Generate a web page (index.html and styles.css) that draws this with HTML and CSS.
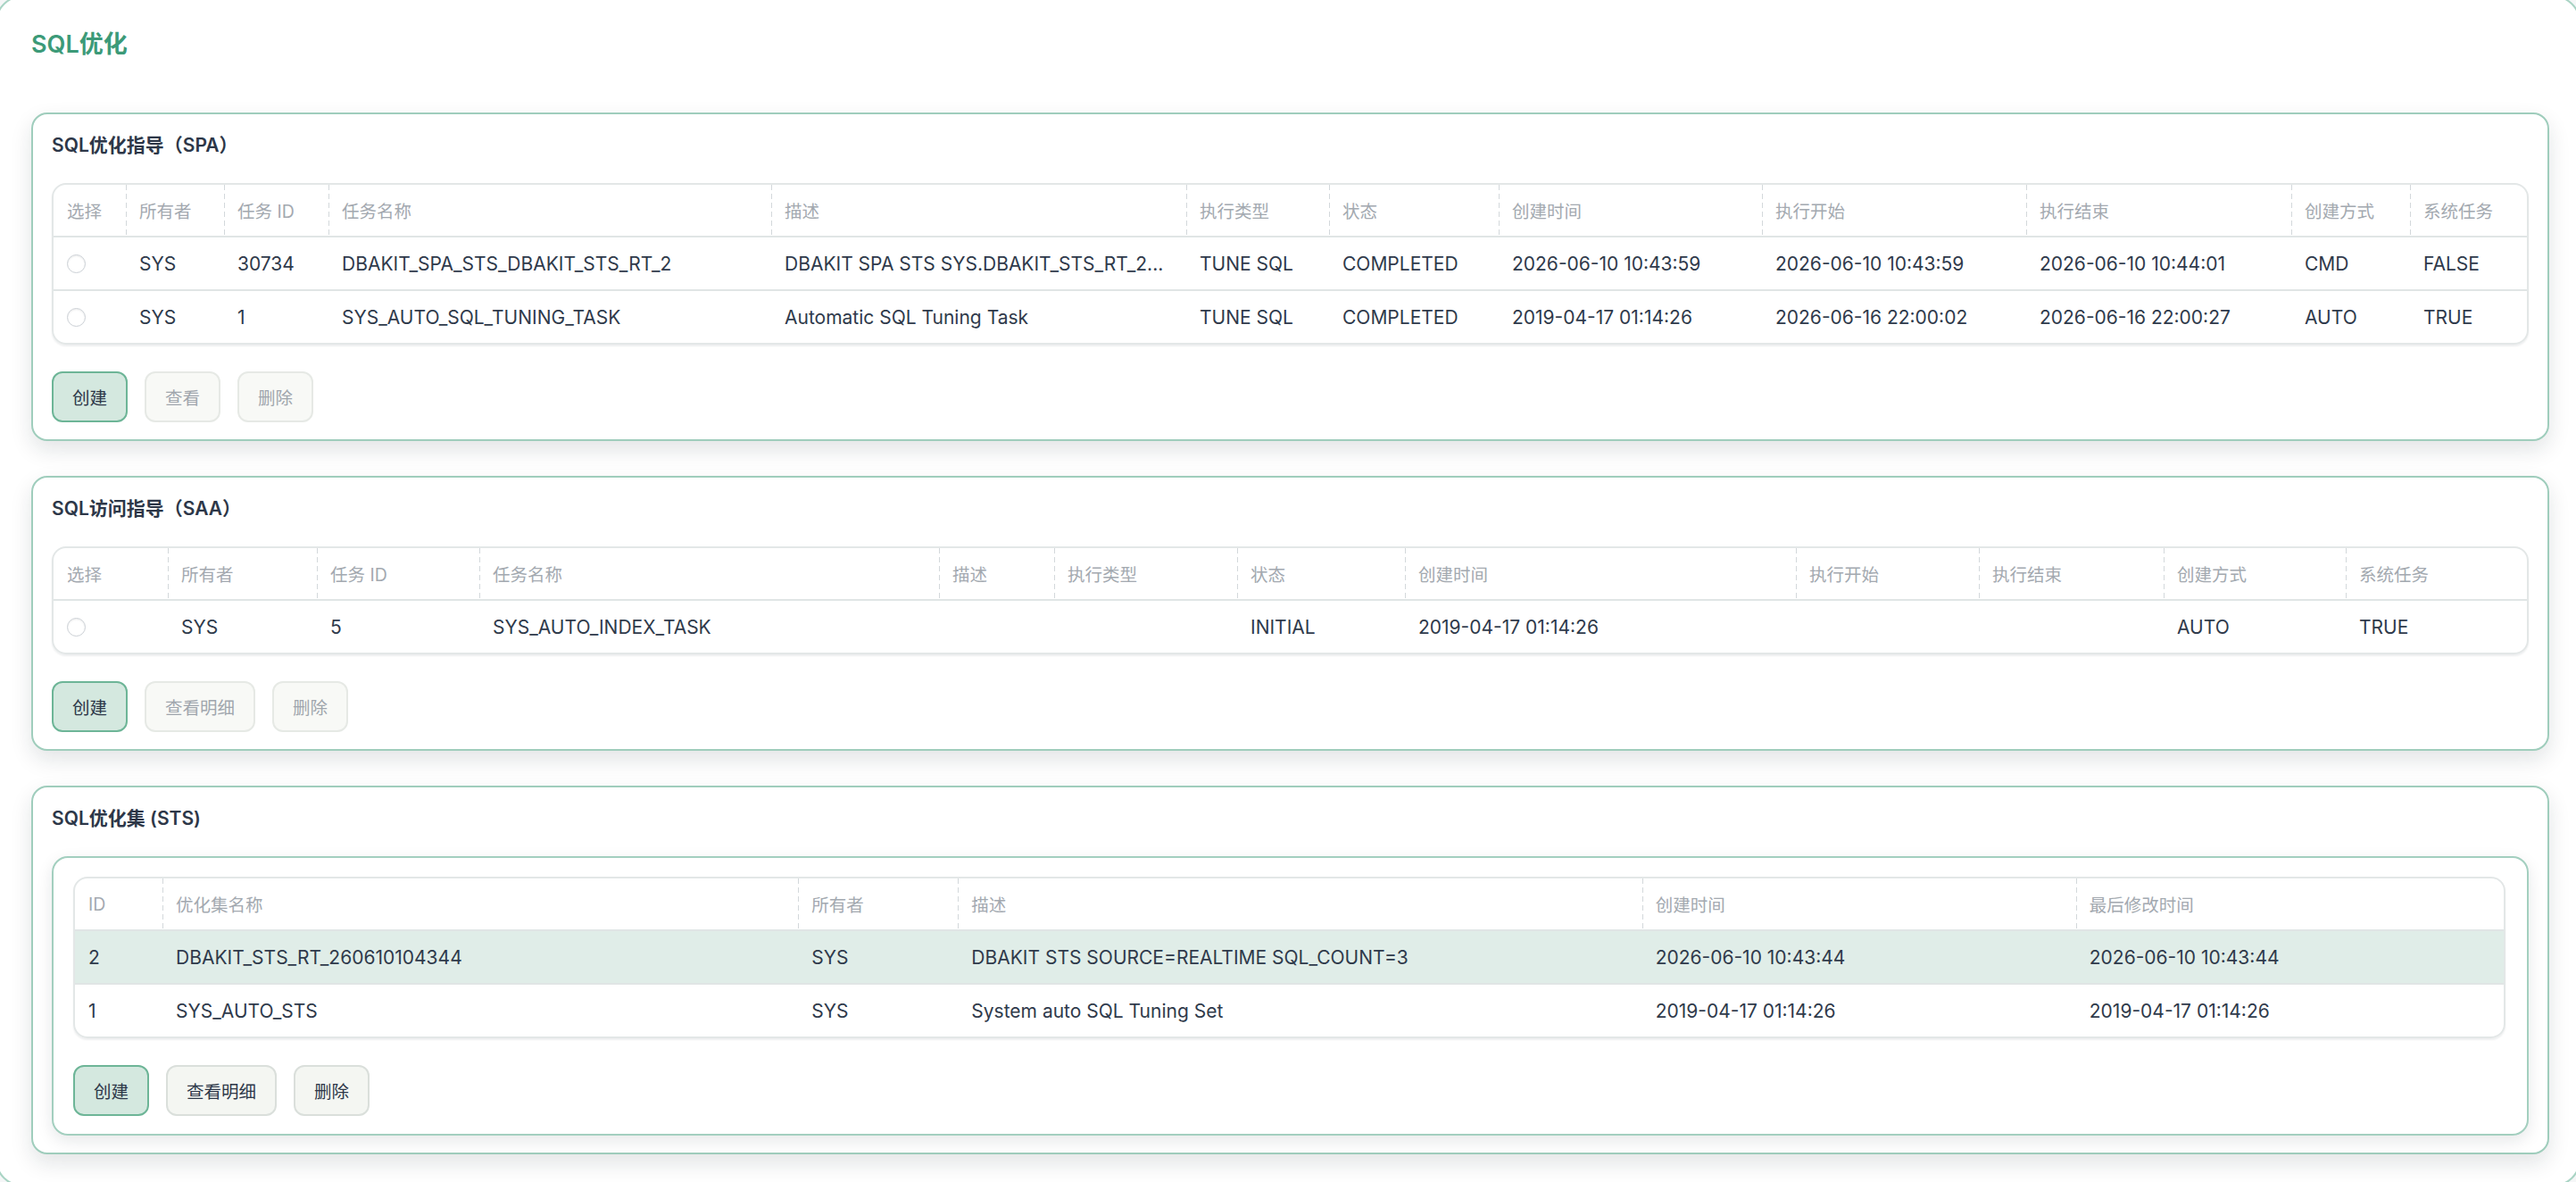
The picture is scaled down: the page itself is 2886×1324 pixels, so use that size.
FILE: index.html
```html
<!DOCTYPE html>
<html lang="zh-CN">
<head>
  <meta charset="UTF-8">
  <title>SQL优化</title>
  <link rel="stylesheet" href="styles.css">
</head>
<body>
<div class="panel">
  <h1 class="page-title">SQL优化</h1>

  <section class="card">
    <h2 class="card-title">SQL优化指导（SPA）</h2>
    <div class="grid-wrap">
      <table class="grid grid-spa">
        <colgroup>
          <col><col><col><col><col><col><col><col><col><col><col><col>
        </colgroup>
        <thead>
        <tr>
          <th>选择</th><th>所有者</th><th>任务 ID</th><th>任务名称</th><th>描述</th><th>执行类型</th>
          <th>状态</th><th>创建时间</th><th>执行开始</th><th>执行结束</th><th>创建方式</th><th>系统任务</th>
        </tr>
        </thead>
        <tbody>
        <tr>
          <td><input class="radio" type="radio" name="spa"></td>
          <td>SYS</td><td>30734</td><td>DBAKIT_SPA_STS_DBAKIT_STS_RT_2</td>
          <td class="cut">DBAKIT SPA STS SYS.DBAKIT_STS_RT_2...</td>
          <td>TUNE SQL</td><td>COMPLETED</td><td>2026-06-10 10:43:59</td><td>2026-06-10 10:43:59</td>
          <td>2026-06-10 10:44:01</td><td>CMD</td><td>FALSE</td>
        </tr>
        <tr>
          <td><input class="radio" type="radio" name="spa"></td>
          <td>SYS</td><td>1</td><td>SYS_AUTO_SQL_TUNING_TASK</td>
          <td class="cut">Automatic SQL Tuning Task</td>
          <td>TUNE SQL</td><td>COMPLETED</td><td>2019-04-17 01:14:26</td><td>2026-06-16 22:00:02</td>
          <td>2026-06-16 22:00:27</td><td>AUTO</td><td>TRUE</td>
        </tr>
        </tbody>
      </table>
    </div>
    <div class="actions">
      <button class="btn btn-primary">创建</button>
      <button class="btn" disabled>查看</button>
      <button class="btn" disabled>删除</button>
    </div>
  </section>

  <section class="card">
    <h2 class="card-title">SQL访问指导（SAA）</h2>
    <div class="grid-wrap">
      <table class="grid grid-saa">
        <colgroup>
          <col><col><col><col><col><col><col><col><col><col><col><col>
        </colgroup>
        <thead>
        <tr>
          <th>选择</th><th>所有者</th><th>任务 ID</th><th>任务名称</th><th>描述</th><th>执行类型</th>
          <th>状态</th><th>创建时间</th><th>执行开始</th><th>执行结束</th><th>创建方式</th><th>系统任务</th>
        </tr>
        </thead>
        <tbody>
        <tr>
          <td><input class="radio" type="radio" name="saa"></td>
          <td>SYS</td><td>5</td><td>SYS_AUTO_INDEX_TASK</td><td></td><td></td>
          <td>INITIAL</td><td>2019-04-17 01:14:26</td><td></td><td></td><td>AUTO</td><td>TRUE</td>
        </tr>
        </tbody>
      </table>
    </div>
    <div class="actions">
      <button class="btn btn-primary">创建</button>
      <button class="btn" disabled>查看明细</button>
      <button class="btn" disabled>删除</button>
    </div>
  </section>

  <section class="card">
    <h2 class="card-title">SQL优化集 (STS)</h2>
    <div class="subcard">
      <div class="grid-wrap">
        <table class="grid grid-sts">
          <colgroup>
            <col><col><col><col><col><col>
          </colgroup>
          <thead>
          <tr>
            <th>ID</th><th>优化集名称</th><th>所有者</th><th>描述</th><th>创建时间</th><th>最后修改时间</th>
          </tr>
          </thead>
          <tbody>
          <tr class="active">
            <td>2</td><td>DBAKIT_STS_RT_260610104344</td><td>SYS</td>
            <td>DBAKIT STS SOURCE=REALTIME SQL_COUNT=3</td><td>2026-06-10 10:43:44</td><td>2026-06-10 10:43:44</td>
          </tr>
          <tr>
            <td>1</td><td>SYS_AUTO_STS</td><td>SYS</td>
            <td>System auto SQL Tuning Set</td><td>2019-04-17 01:14:26</td><td>2019-04-17 01:14:26</td>
          </tr>
          </tbody>
        </table>
      </div>
      <div class="actions">
        <button class="btn btn-primary">创建</button>
        <button class="btn btn-dark">查看明细</button>
        <button class="btn btn-dark">删除</button>
      </div>
    </div>
  </section>
</div>
</body>
</html>
```

FILE: styles.css
```css
body {
  margin: 0;
  overflow: hidden;
  background-color: #f5f6f7;
  font-family: Inter, "Noto Sans CJK SC", sans-serif;
  color: #2f3a4b;
}

/* outer panel is a bit larger than the window, only its corners peek in */
.panel {
  margin: -5px -5px 0 -5px;
  height: 1334px;
  box-sizing: border-box;
  padding: 34px 33px 0 38px;
  background-color: #fff;
  border: 2px solid #a9d4c4;
  border-radius: 30px;
}

.page-title {
  margin: 0 0 57px;
  font-size: 27px;
  line-height: 38px;
  font-weight: 600;
  color: #3c9a78;
}

.card {
  padding: 20px 21px 19px;
  margin-bottom: 39px;
  background-color: #fff;
  border: 2px solid #9fcdbc;
  border-radius: 18px;
  box-shadow: 0 10px 24px rgba(20, 30, 40, 0.12);
}

.card-title {
  margin: 0 0 27px;
  font-size: 21px;
  line-height: 30px;
  font-weight: 600;
  color: #2d3748;
}

.subcard {
  padding: 21px 24px 20px 22px;
  border: 2px solid #a3cfbf;
  border-radius: 18px;
  background-color: #fff;
  box-shadow: 0 6px 18px rgba(20, 30, 40, 0.1);
}

.grid-wrap {
  border: 2px solid #e3e7e7;
  border-radius: 16px;
  overflow: hidden;
  box-shadow: 0 2px 2px rgba(20, 30, 40, 0.07);
}

.grid {
  width: 100%;
  table-layout: fixed;
  border-collapse: collapse;
}

.grid th,
.grid td {
  padding: 0 15px;
  text-align: left;
  white-space: nowrap;
  overflow: hidden;
  vertical-align: middle;
}

.grid th {
  height: 57px;
  font-size: 19.5px;
  font-weight: 400;
  color: #a3a9b0;
  border-bottom: 2px solid #e0e5e5;
  background-image: linear-gradient(#d3d8db 60%, transparent 0);
  background-size: 1px 10px;
  background-repeat: repeat-y;
  background-position: 0 0;
}

.grid th:first-child {
  background-image: none;
}

.grid td {
  height: 58px;
  font-size: 21px;
  color: #2f3a4b;
  border-bottom: 2px solid #e0e5e5;
}

.grid tr:last-child td {
  border-bottom: 0;
}

.grid td.cut {
  text-overflow: ellipsis;
}

.grid tr.active td {
  background-color: #e0ede8;
}

.radio {
  appearance: none;
  -webkit-appearance: none;
  display: block;
  margin: 0;
  width: 21px;
  height: 21px;
  border: 1.5px solid #cbd0d5;
  border-radius: 50%;
  background-color: #fff;
  box-shadow: inset 0 1px 2px rgba(0, 0, 0, 0.08);
}

/* SPA columns */
.grid-spa col:nth-child(1) { width: 81px; }
.grid-spa col:nth-child(2) { width: 110px; }
.grid-spa col:nth-child(3) { width: 117px; }
.grid-spa col:nth-child(4) { width: 496px; }
.grid-spa col:nth-child(5) { width: 465px; }
.grid-spa col:nth-child(6) { width: 160px; }
.grid-spa col:nth-child(7) { width: 190px; }
.grid-spa col:nth-child(8) { width: 295px; }
.grid-spa col:nth-child(9) { width: 296px; }
.grid-spa col:nth-child(10) { width: 297px; }
.grid-spa col:nth-child(11) { width: 133px; }
.grid-spa col:nth-child(12) { width: 131px; }

/* SAA columns */
.grid-saa col:nth-child(1) { width: 128px; }
.grid-saa col:nth-child(2) { width: 167px; }
.grid-saa col:nth-child(3) { width: 182px; }
.grid-saa col:nth-child(4) { width: 515px; }
.grid-saa col:nth-child(5) { width: 129px; }
.grid-saa col:nth-child(6) { width: 205px; }
.grid-saa col:nth-child(7) { width: 188px; }
.grid-saa col:nth-child(8) { width: 438px; }
.grid-saa col:nth-child(9) { width: 205px; }
.grid-saa col:nth-child(10) { width: 207px; }
.grid-saa col:nth-child(11) { width: 204px; }
.grid-saa col:nth-child(12) { width: 203px; }

/* STS columns */
.grid-sts col:nth-child(1) { width: 98px; }
.grid-sts col:nth-child(2) { width: 712px; }
.grid-sts col:nth-child(3) { width: 179px; }
.grid-sts col:nth-child(4) { width: 766px; }
.grid-sts col:nth-child(5) { width: 486px; }
.grid-sts col:nth-child(6) { width: 479px; }

.actions {
  display: flex;
  gap: 19px;
  margin-top: 30px;
}

.btn {
  height: 57px;
  padding: 0 21px;
  font-family: inherit;
  font-size: 19.5px;
  color: #a0a6ad;
  background-color: #f8f9f6;
  border: 2px solid #e6e9e5;
  border-radius: 12px;
}

.btn-primary {
  color: #2d3748;
  background-color: #d4e8df;
  border-color: #6db597;
}

.btn-dark {
  color: #2d3748;
  background-color: #f4f6f2;
  border-color: #dadfdb;
}
```
